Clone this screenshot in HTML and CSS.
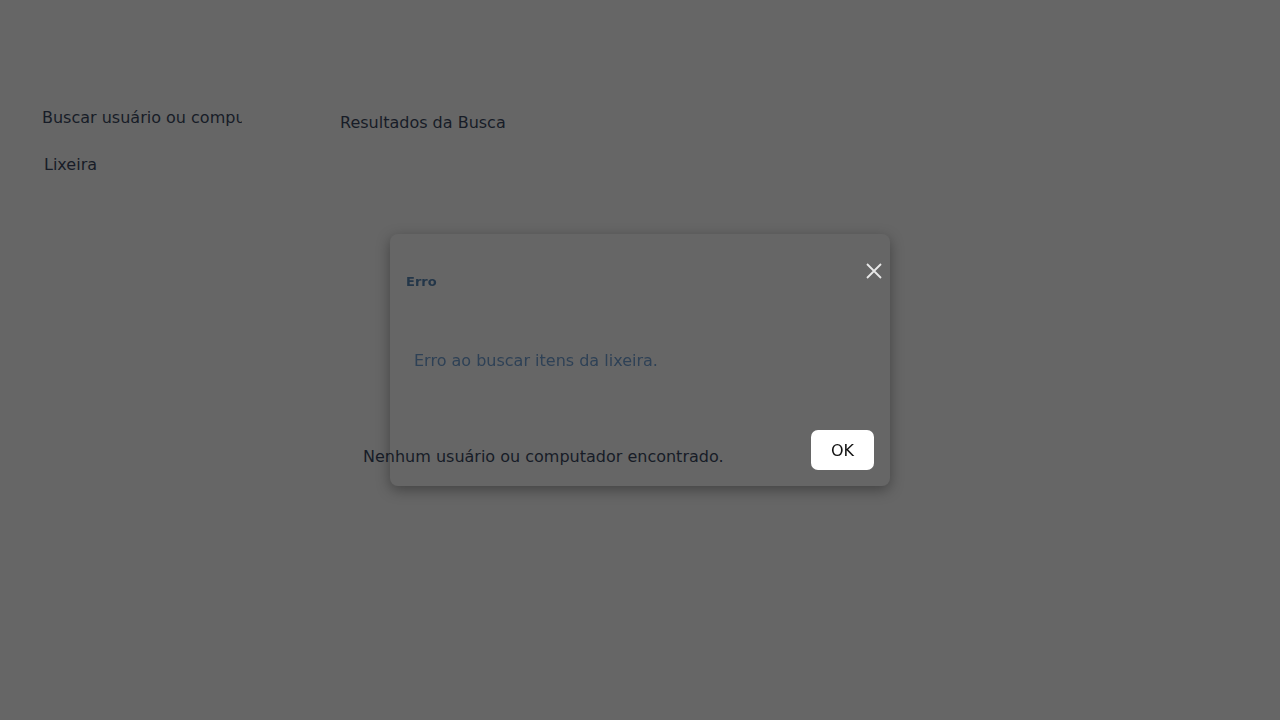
FILE: index.html
```html
<!DOCTYPE html>
<html lang="pt-BR">
<head>
<meta charset="utf-8">
<title>Lixeira</title>
<link rel="stylesheet" href="styles.css">
</head>
<body>
<div class="app">
  <aside class="sidebar">
    <input class="search" type="text" placeholder="Buscar usuário ou computador">
    <div class="nav-item">Lixeira</div>
  </aside>
  <main class="main">
    <h2 class="main-title">Resultados da Busca</h2>
    <p class="empty">Nenhum usuário ou computador encontrado.</p>
  </main>
</div>
<div class="overlay">
  <div class="modal">
    <div class="modal-head">
      <span class="modal-title">Erro</span>
      <button class="close" aria-label="Fechar">
        <svg width="16" height="16" viewBox="0 0 16 16"><path d="M1 1 L15 15 M15 1 L1 15" stroke="#e8e8e8" stroke-width="1.8" fill="none"/></svg>
      </button>
    </div>
    <div class="modal-body">Erro ao buscar itens da lixeira.</div>
    <div class="modal-foot">
      <button class="ok">OK</button>
    </div>
  </div>
</div>
</body>
</html>
```
FILE: styles.css
```css
html, body {
  margin: 0;
  padding: 0;
  height: 100%;
}
body {
  background: #666666;
  font-family: "DejaVu Sans", sans-serif;
  color: #171c27;
  font-size: 16px;
}
.app {
  display: flex;
  min-height: 100%;
}
.sidebar {
  width: 300px;
  padding: 107px 0 0 42px;
  box-sizing: border-box;
  display: flex;
  flex-direction: column;
  gap: 28px;
}
.search {
  width: 200px;
  border: none;
  background: transparent;
  font: inherit;
  font-size: 16px;
  padding: 0;
  height: 20px;
  color: #171c27;
  outline: none;
}
.search::placeholder {
  color: #171c27;
  opacity: 1;
}
.nav-item {
  padding-left: 2px;
  line-height: 20px;
}
.main {
  padding: 113px 0 0 40px;
  flex: 1;
}
.main-title {
  margin: 0;
  font-size: 16px;
  font-weight: normal;
  line-height: 20px;
}
.empty {
  margin: 314px 0 0 23px;
  line-height: 20px;
}
.overlay {
  position: fixed;
  inset: 0;
  display: flex;
  align-items: center;
  justify-content: center;
  pointer-events: none;
}
.modal {
  width: 500px;
  height: 252px;
  box-sizing: border-box;
  border-radius: 8px;
  box-shadow: 0 4px 14px rgba(0, 0, 0, 0.35);
  padding: 28px 16px 16px 16px;
  display: flex;
  flex-direction: column;
}
.modal-head {
  display: flex;
  justify-content: space-between;
  align-items: flex-start;
}
.modal-title {
  font-size: 13px;
  font-weight: bold;
  color: #233649;
  margin-top: 12px;
}
.close {
  background: none;
  border: none;
  padding: 0;
  margin: 1px -8px 0 0;
  width: 16px;
  height: 16px;
  display: flex;
}
.modal-body {
  margin: 62px 0 0 8px;
  color: #2e4156;
  font-size: 16px;
  line-height: 20px;
  flex: 1;
}
.modal-foot {
  display: flex;
  justify-content: flex-end;
}
.ok {
  width: 63px;
  height: 40px;
  background: #ffffff;
  border: none;
  border-radius: 7px;
  font-family: "DejaVu Sans", sans-serif;
  font-size: 16px;
  color: #111111;
  padding: 0;
}
```
